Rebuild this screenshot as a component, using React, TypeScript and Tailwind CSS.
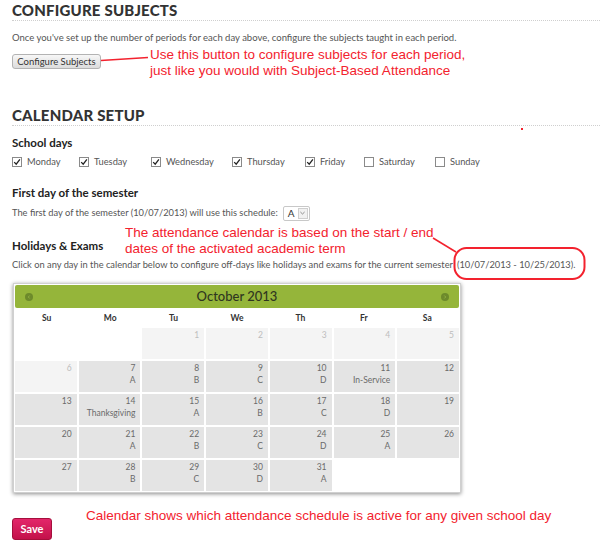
import React from 'react';

const ui = "font-['Lato','Open_Sans',sans-serif]";
const note = "font-['Liberation_Sans',Arial,sans-serif] text-[13.5px] leading-[16px] text-[#f3222e]";

type Cell = { day?: number; label?: string; muted?: boolean } | null;

const weeks: Cell[][] = [
  [null, null, { day: 1, muted: true }, { day: 2, muted: true }, { day: 3, muted: true }, { day: 4, muted: true }, { day: 5, muted: true }],
  [{ day: 6, muted: true }, { day: 7, label: 'A' }, { day: 8, label: 'B' }, { day: 9, label: 'C' }, { day: 10, label: 'D' }, { day: 11, label: 'In-Service' }, { day: 12 }],
  [{ day: 13 }, { day: 14, label: 'Thanksgiving' }, { day: 15, label: 'A' }, { day: 16, label: 'B' }, { day: 17, label: 'C' }, { day: 18, label: 'D' }, { day: 19 }],
  [{ day: 20 }, { day: 21, label: 'A' }, { day: 22, label: 'B' }, { day: 23, label: 'C' }, { day: 24, label: 'D' }, { day: 25, label: 'A' }, { day: 26 }],
  [{ day: 27 }, { day: 28, label: 'B' }, { day: 29, label: 'C' }, { day: 30, label: 'D' }, { day: 31, label: 'A' }, null, null],
];

const days = [
  { name: 'Monday', on: true, w: 'w-[67px]' },
  { name: 'Tuesday', on: true, w: 'w-[72px]' },
  { name: 'Wednesday', on: true, w: 'w-[81px]' },
  { name: 'Thursday', on: true, w: 'w-[73px]' },
  { name: 'Friday', on: true, w: 'w-[59px]' },
  { name: 'Saturday', on: false, w: 'w-[71px]' },
  { name: 'Sunday', on: false, w: 'w-[60px]' },
];

const Check: React.FC<{ on: boolean }> = ({ on }) => (
  <span className="w-[10px] h-[10px] border border-[#8a8a8a] bg-white flex items-center justify-center shrink-0">
    {on && (
      <svg viewBox="0 0 10 10" className="w-[8px] h-[8px]">
        <path d="M1.5 5.2 L4 7.8 L8.6 1.8" fill="none" stroke="#222" strokeWidth="1.6" />
      </svg>
    )}
  </span>
);

const NavDot: React.FC<{ dir: 'l' | 'r' }> = ({ dir }) => (
  <span className="w-[8px] h-[8px] rounded-full bg-[#6d8a2b] flex items-center justify-center">
    <svg viewBox="0 0 8 8" className="w-[6px] h-[6px]">
      {dir === 'l' ? <path d="M5 2 L3 4 L5 6" fill="none" stroke="#9ab848" strokeWidth="1" /> : <path d="M3 2 L5 4 L3 6" fill="none" stroke="#9ab848" strokeWidth="1" />}
    </svg>
  </span>
);

export default function App() {
  return (
    <div className={`relative w-[600px] h-[545px] overflow-hidden bg-white text-[#555] ${ui}`}>
      <div className="pl-[12px]">
        <h2 className="h-[21px] border-b border-dotted border-[#cfcfcf] text-[15px] leading-[20px] font-black text-[#333] tracking-[0.2px]">CONFIGURE SUBJECTS</h2>
        <p className="mt-[10px] text-[9.5px] leading-[14px] text-[#555]">
          Once you've set up the number of periods for each day above, configure the subjects taught in each period.
        </p>
        <button className="mt-[9px] h-[15px] w-[89px] rounded-[3px] border border-[#b3b3b3] bg-gradient-to-b from-[#f7f7f7] to-[#dcdcdc] text-[9.5px] leading-[13px] text-[#333]">
          Configure Subjects
        </button>

        <h2 className="mt-[34px] h-[21px] border-b border-dotted border-[#cfcfcf] text-[15px] leading-[20px] font-black text-[#333] tracking-[0.2px]">CALENDAR SETUP</h2>

        <h3 className="mt-[9px] text-[11.5px] leading-[16px] font-bold text-[#222]">School days</h3>
        <div className="mt-[4px] flex h-[14px] items-center text-[9.3px] text-[#555]">
          {days.map(d => (
            <label key={d.name} className={`${d.w} flex items-center gap-[5px]`}>
              <Check on={d.on} />
              <span>{d.name}</span>
            </label>
          ))}
        </div>

        <h3 className="mt-[16px] text-[11.5px] leading-[16px] font-bold text-[#222]">First day of the semester</h3>
        <div className="mt-[4px] flex h-[16px] items-center text-[9.3px] text-[#555]">
          <span>The first day of the semester (10/07/2013) will use this schedule:</span>
          <span className="ml-[5px] flex h-[15px] w-[27px] items-center justify-between rounded-[2px] border border-[#c8c8c8] bg-white pl-[4px] pr-[1px]">
            <span className="text-[10px] text-[#333]">A</span>
            <span className="flex h-[11px] w-[10px] items-center justify-center border border-[#cfcfcf] bg-[#f1f1f1]">
              <svg viewBox="0 0 6 4" className="w-[5px] h-[4px]"><path d="M0.5 0.8 L3 3.2 L5.5 0.8" fill="none" stroke="#777" strokeWidth="1" /></svg>
            </span>
          </span>
        </div>

        <h3 className="mt-[17px] text-[11.5px] leading-[16px] font-bold text-[#222]">Holidays &amp; Exams</h3>
        <p className="mt-[4px] whitespace-nowrap text-[9.3px] leading-[14px] text-[#555]">
          Click on any day in the calendar below to configure off-days like holidays and exams for the current semester<span className="pl-[4px]">(10/07/2013 - 10/25/2013).</span>
        </p>

        <div className="mt-[11px] ml-[1px] w-[448px] border border-[#d0d0d0] bg-white p-[1px] shadow-[0_1px_4px_rgba(0,0,0,0.45)]">
          <div className="flex h-[23px] items-center justify-between rounded-[2px] bg-[#95b53a] px-[10px]">
            <NavDot dir="l" />
            <span className="text-[13px] font-medium text-[#2f3520]">October 2013</span>
            <NavDot dir="r" />
          </div>
          <div className="grid h-[20px] grid-cols-7 items-center text-center text-[8.5px] font-bold text-[#333]">
            {['Su', 'Mo', 'Tu', 'We', 'Th', 'Fr', 'Sa'].map(n => <span key={n}>{n}</span>)}
          </div>
          <div className="grid grid-cols-7 gap-[2px]">
            {weeks.flat().map((c, i) => (
              <div
                key={i}
                className={`h-[31px] pr-[5px] pt-[1px] text-right text-[8.5px] leading-[12px] ${
                  c === null ? 'bg-white' : c.muted ? 'bg-[#f4f4f4] text-[#bdbdbd]' : 'bg-[#e4e4e4] text-[#6a6a6a]'
                }`}
              >
                {c && (
                  <>
                    <div>{c.day}</div>
                    {c.label && <div>{c.label}</div>}
                  </>
                )}
              </div>
            ))}
          </div>
        </div>

        <button className="mt-[25px] h-[22px] w-[40px] rounded-[3px] border border-[#a50f3c] bg-gradient-to-b from-[#e3266a] to-[#c3114a] text-[11px] font-bold text-white">
          Save
        </button>
      </div>

      {/* annotations */}
      <div className={`absolute left-[150px] top-[47px] ${note}`}>
        <div>Use this button to configure subjects for each period,</div>
        <div>just like you would with Subject-Based Attendance</div>
      </div>
      <div className={`absolute left-[125px] top-[225px] ${note}`}>
        <div>The attendance calendar is based on the start / end</div>
        <div>dates of the activated academic term</div>
      </div>
      <div className={`absolute left-[86px] top-[508px] ${note}`}>
        Calendar shows which attendance schedule is active for any given school day
      </div>
      <svg className="pointer-events-none absolute left-0 top-0" width="600" height="545">
        <path d="M101 60.5 L148 57.5" stroke="#f3222e" strokeWidth="1.5" fill="none" />
        <path d="M433 238 L456 252" stroke="#f3222e" strokeWidth="1.5" fill="none" />
        <rect x="454.5" y="248" width="130" height="31" rx="12" ry="12" stroke="#f3222e" strokeWidth="2" fill="none" />
        <rect x="521" y="128" width="2" height="2" fill="#f3222e" />
      </svg>
    </div>
  );
}
